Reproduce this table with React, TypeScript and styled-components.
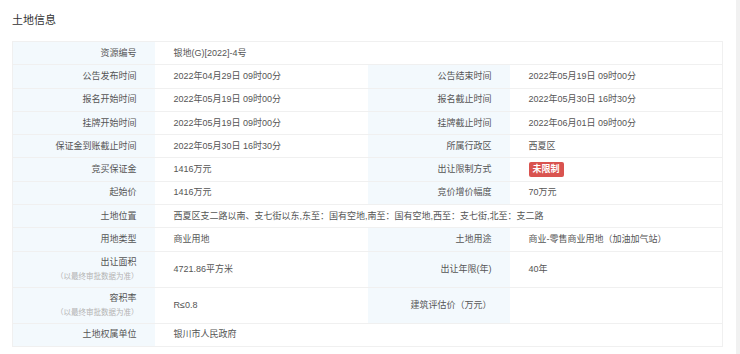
import React from "react";
import styled, { createGlobalStyle } from "styled-components";

const GlobalStyle = createGlobalStyle`
  html, body {
    margin: 0;
    padding: 0;
    background: #ffffff;
  }
  body {
    font-family: "Liberation Sans", "Noto Sans CJK SC", sans-serif;
    color: #555555;
  }
`;

const Page = styled.div`
  display: grid;
  grid-template-columns: 1fr 4px;
  width: 740px;
  height: 354px;
  overflow: hidden;
`;

const Main = styled.div`
  padding: 13px 13px 0 12px;
  background: #ffffff;
`;

const Track = styled.div`
  background: #f1f1f1;
`;

const Title = styled.div`
  font-size: 11px;
  line-height: 14px;
  color: #333333;
  margin-bottom: 14px;
`;

const InfoTable = styled.table`
  width: 100%;
  border-collapse: collapse;
  table-layout: fixed;
  border: 1px solid #f0f0f0;
  font-size: 9px;
`;

const InfoRow = styled.tr<{ $tall?: boolean }>`
  height: ${(props) => (props.$tall ? "36px" : "23.3px")};
`;

const LabelCell = styled.td`
  background: #f3f9fd;
  text-align: right;
  padding: 0 18px;
  border-bottom: 1px solid #f0f0f0;
  color: #555555;
  line-height: 13px;
`;

const ValueCell = styled.td`
  background: #ffffff;
  padding: 0 18px 0 19px;
  border-bottom: 1px solid #f0f0f0;
  color: #555555;
  white-space: nowrap;
  line-height: 13px;
`;

const Note = styled.div`
  font-size: 7.5px;
  line-height: 11px;
  color: #b3b3b3;
  margin-top: 2px;
  margin-right: -2px;
`;

const Badge = styled.span`
  display: inline-block;
  background: #d9534f;
  color: #ffffff;
  font-weight: bold;
  font-size: 9px;
  line-height: 15px;
  padding: 0 4px;
  border-radius: 2px;
`;

type Item = {
  label: string;
  note?: string;
  value?: React.ReactNode;
};

type Row = { cells: Item[]; tall?: boolean };

const rows: Row[] = [
  { cells: [{ label: "资源编号", value: "银地(G)[2022]-4号" }] },
  {
    cells: [
      { label: "公告发布时间", value: "2022年04月29日 09时00分" },
      { label: "公告结束时间", value: "2022年05月19日 09时00分" },
    ],
  },
  {
    cells: [
      { label: "报名开始时间", value: "2022年05月19日 09时00分" },
      { label: "报名截止时间", value: "2022年05月30日 16时30分" },
    ],
  },
  {
    cells: [
      { label: "挂牌开始时间", value: "2022年05月19日 09时00分" },
      { label: "挂牌截止时间", value: "2022年06月01日 09时00分" },
    ],
  },
  {
    cells: [
      { label: "保证金到账截止时间", value: "2022年05月30日 16时30分" },
      { label: "所属行政区", value: "西夏区" },
    ],
  },
  {
    cells: [
      { label: "竞买保证金", value: "1416万元" },
      { label: "出让限制方式", value: <Badge>未限制</Badge> },
    ],
  },
  {
    cells: [
      { label: "起始价", value: "1416万元" },
      { label: "竞价增价幅度", value: "70万元" },
    ],
  },
  {
    cells: [
      {
        label: "土地位置",
        value: "西夏区支二路以南、支七街以东,东至：国有空地,南至：国有空地,西至：支七街,北至：支二路",
      },
    ],
  },
  {
    cells: [
      { label: "用地类型", value: "商业用地" },
      { label: "土地用途", value: "商业-零售商业用地（加油加气站）" },
    ],
  },
  {
    tall: true,
    cells: [
      { label: "出让面积", note: "（以最终审批数据为准）", value: "4721.86平方米" },
      { label: "出让年限(年)", value: "40年" },
    ],
  },
  {
    tall: true,
    cells: [
      { label: "容积率", note: "（以最终审批数据为准）", value: "R≤0.8" },
      { label: "建筑评估价（万元）", value: "" },
    ],
  },
  { cells: [{ label: "土地权属单位", value: "银川市人民政府" }] },
];

const App = () => {
  return (
    <>
      <GlobalStyle />
      <Page>
        <Main>
          <Title>土地信息</Title>
          <InfoTable>
            <colgroup>
              <col style={{ width: "20%" }} />
              <col style={{ width: "30%" }} />
              <col style={{ width: "20%" }} />
              <col style={{ width: "30%" }} />
            </colgroup>
            <tbody>
              {rows.map((row, i) => (
                <InfoRow key={i} $tall={row.tall}>
                  {row.cells.map((cell, j) => (
                    <React.Fragment key={j}>
                      <LabelCell>
                        <div>{cell.label}</div>
                        {cell.note && <Note>{cell.note}</Note>}
                      </LabelCell>
                      <ValueCell colSpan={row.cells.length === 1 ? 3 : 1}>
                        {cell.value}
                      </ValueCell>
                    </React.Fragment>
                  ))}
                </InfoRow>
              ))}
            </tbody>
          </InfoTable>
        </Main>
        <Track />
      </Page>
    </>
  );
};

export default App;
